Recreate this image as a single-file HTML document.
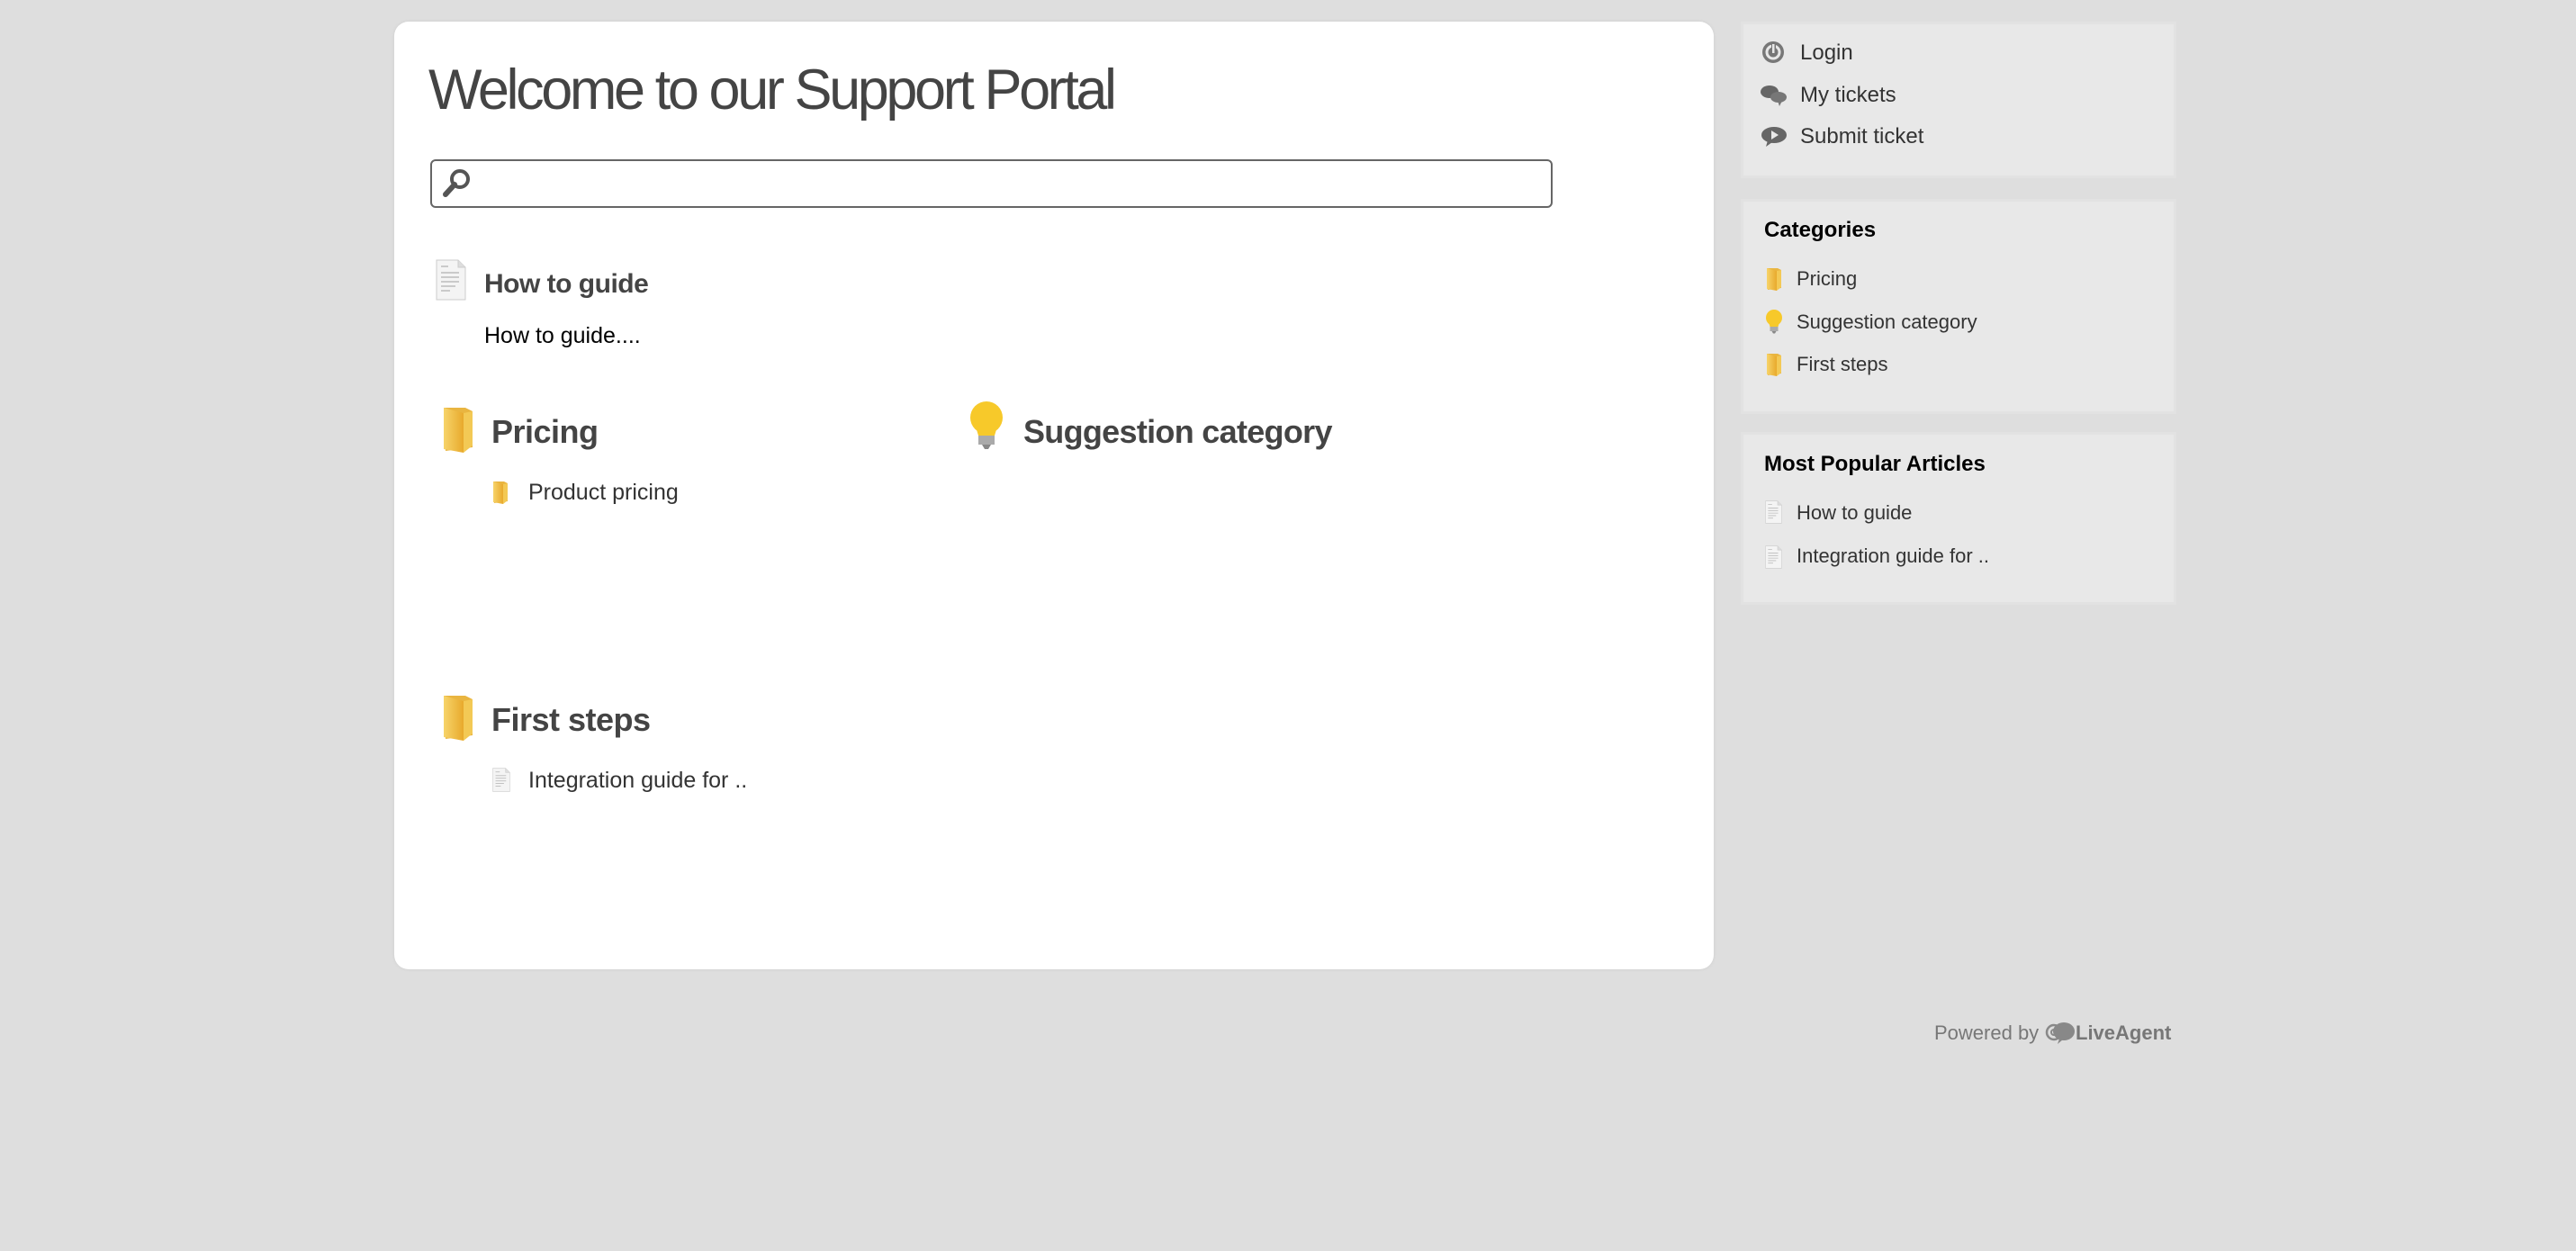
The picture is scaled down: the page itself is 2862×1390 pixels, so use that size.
<!DOCTYPE html>
<html><head><meta charset="utf-8"><style>
body{margin:0;width:2862px;height:1390px;background:#dedede;font-family:"Liberation Sans",sans-serif;position:relative;overflow:hidden}
.a{position:absolute;white-space:nowrap}
.main{position:absolute;left:438px;top:24px;width:1466px;height:1053px;background:#fff;border-radius:16px;box-shadow:0 0 3px #ccc}
.side{position:absolute;left:1934px;width:478px;background:#e8e8e8;border:3px solid #e2e2e2}
.h{font-weight:bold;color:#444}
.s{font-size:22px;color:#333}
.sh{font-size:24px;font-weight:bold;color:#000}
</style></head><body>
<svg width="0" height="0" style="position:absolute"><defs>
<linearGradient id="fg" x1="0" x2="1"><stop offset="0" stop-color="#f7d46a"/><stop offset="1" stop-color="#e8a92c"/></linearGradient>
<symbol id="folder" viewBox="0 0 38 52"><path d="M2 2h24l8 4v40l-30 4z" fill="#e9b540"/><path d="M2 2l22 6v44L2 48z" fill="url(#fg)"/><path d="M24 8l10-2v38l-10 8z" fill="#f3c955"/></symbol>
<symbol id="doc" viewBox="0 0 34 46"><path d="M1 1h24l8 8v36H1z" fill="#f4f4f4" stroke="#ccc"/><path d="M25 1v8h8" fill="#ddd" stroke="#ccc"/><g stroke="#bbb" stroke-width="1.5"><path d="M6 8h8M6 15h20M6 20h20M6 25h20M6 30h16M6 35h10"/></g></symbol>
<symbol id="bulb" viewBox="0 0 40 54"><ellipse cx="20" cy="18" rx="18" ry="18" fill="#f7c92a"/><path d="M8 28h24l-3 10H11z" fill="#f7c92a"/><rect x="11" y="38" width="18" height="10" fill="#aaa"/><path d="M15 48h10l-3 5h-4z" fill="#888"/></symbol>
</defs></svg>
<div class="main"></div>
<div class="a" style="left:476px;top:64px;font-size:63px;color:#444;letter-spacing:-3.4px">Welcome to our Support Portal</div>
<div class="a" style="left:478px;top:177px;width:1243px;height:50px;border:2px solid #666;border-radius:6px"></div>
<svg class="a" style="left:490px;top:185px" width="36" height="36" viewBox="0 0 36 36"><circle cx="21" cy="14" r="9" fill="none" stroke="#555" stroke-width="4"/><path d="M15 20L5 31" stroke="#555" stroke-width="6" stroke-linecap="round"/></svg>
<svg class="a" style="left:484px;top:288px" width="34" height="46"><use href="#doc"/></svg>
<div class="a h" style="left:538px;top:299px;font-size:30px;letter-spacing:-0.5px">How to guide</div>
<div class="a" style="left:538px;top:359px;font-size:25px;color:#000">How to guide....</div>
<svg class="a" style="left:491px;top:451px" width="38" height="52"><use href="#folder"/></svg>
<div class="a h" style="left:546px;top:459px;font-size:36px;letter-spacing:-0.5px">Pricing</div>
<svg class="a" style="left:1076px;top:446px" width="40" height="54"><use href="#bulb"/></svg>
<div class="a h" style="left:1137px;top:459px;font-size:36px;letter-spacing:-0.7px">Suggestion category</div>
<svg class="a" style="left:547px;top:534px" width="19" height="26"><use href="#folder"/></svg>
<div class="a" style="left:587px;top:533px;font-size:25px;color:#333">Product pricing</div>
<svg class="a" style="left:491px;top:771px" width="38" height="52"><use href="#folder"/></svg>
<div class="a h" style="left:546px;top:779px;font-size:36px;letter-spacing:-0.5px">First steps</div>
<svg class="a" style="left:547px;top:853px" width="20" height="27"><use href="#doc"/></svg>
<div class="a" style="left:587px;top:853px;font-size:25px;color:#333">Integration guide for ..</div>

<div class="side" style="top:24px;height:168px"></div>
<div class="side" style="top:221px;height:233px"></div>
<div class="side" style="top:480px;height:186px"></div>
<svg class="a" style="left:1956px;top:44px" width="30" height="28" viewBox="0 0 30 28"><circle cx="14" cy="14" r="12" fill="#777"/><circle cx="14" cy="14" r="7" fill="none" stroke="#e8e8e8" stroke-width="3"/><rect x="12" y="3" width="5" height="12" fill="#777"/><rect x="13" y="5" width="2.5" height="10" fill="#e8e8e8"/></svg>
<div class="a" style="left:2000px;top:45px;font-size:24px;color:#333">Login</div>
<svg class="a" style="left:1955px;top:92px" width="32" height="28" viewBox="0 0 32 28"><ellipse cx="11" cy="10" rx="10" ry="7" fill="#666"/><ellipse cx="21" cy="16" rx="9" ry="6" fill="#777"/><path d="M20 20l2 6 3-6z" fill="#777"/></svg>
<div class="a" style="left:2000px;top:92px;font-size:24px;color:#333">My tickets</div>
<svg class="a" style="left:1956px;top:138px" width="32" height="28" viewBox="0 0 32 28"><ellipse cx="15" cy="12" rx="14" ry="9" fill="#666"/><path d="M8 18l-2 7 7-5z" fill="#666"/><path d="M12 7l8 5-8 5z" fill="#e8e8e8"/></svg>
<div class="a" style="left:2000px;top:138px;font-size:24px;color:#333">Submit ticket</div>

<div class="a sh" style="left:1960px;top:242px">Categories</div>
<svg class="a" style="left:1962px;top:297px" width="19" height="26"><use href="#folder"/></svg>
<div class="a s" style="left:1996px;top:297px">Pricing</div>
<svg class="a" style="left:1961px;top:344px" width="20" height="27"><use href="#bulb"/></svg>
<div class="a s" style="left:1996px;top:345px">Suggestion category</div>
<svg class="a" style="left:1962px;top:392px" width="19" height="26"><use href="#folder"/></svg>
<div class="a s" style="left:1996px;top:392px">First steps</div>

<div class="a sh" style="left:1960px;top:502px">Most Popular Articles</div>
<svg class="a" style="left:1961px;top:556px" width="19" height="26"><use href="#doc"/></svg>
<div class="a s" style="left:1996px;top:557px">How to guide</div>
<svg class="a" style="left:1961px;top:606px" width="19" height="26"><use href="#doc"/></svg>
<div class="a s" style="left:1996px;top:605px">Integration guide for ..</div>

<div class="a" style="left:2149px;top:1135px;font-size:22px;color:#777">Powered by</div>
<svg class="a" style="left:2272px;top:1135px" width="34" height="26" viewBox="0 0 34 26"><ellipse cx="21" cy="11" rx="12" ry="10" fill="#888"/><path d="M16 19l-2 6 6-5z" fill="#888"/><circle cx="10" cy="12" r="8" fill="none" stroke="#888" stroke-width="2.5"/><circle cx="10" cy="12" r="3" fill="none" stroke="#888" stroke-width="2"/></svg>
<div class="a" style="left:2306px;top:1135px;font-size:22px;color:#777;font-weight:bold">LiveAgent</div>
</body></html>
